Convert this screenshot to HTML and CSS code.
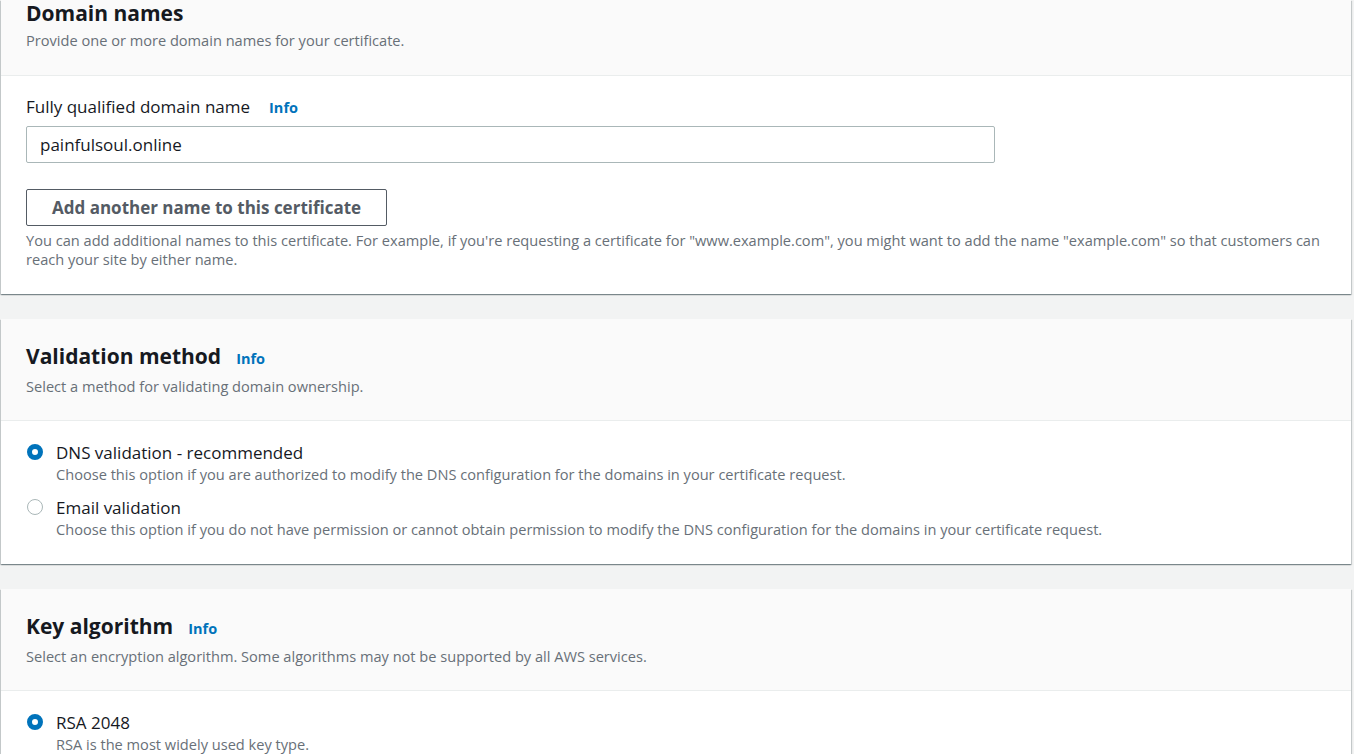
FILE: index.html
```html
<!DOCTYPE html>
<html lang="en">
<head>
<meta charset="utf-8">
<title>Request certificate</title>
<link rel="stylesheet" href="styles.css">
</head>
<body>
<main class="page">
  <section class="card card-first">
    <header class="card-header">
      <h2 class="card-title">Domain names</h2>
      <p class="card-desc">Provide one or more domain names for your certificate.</p>
    </header>
    <div class="card-body">
      <div class="field-label">Fully qualified domain name <a class="info">Info</a></div>
      <div class="input">painfulsoul.online</div>
      <button class="btn" type="button">Add another name to this certificate</button>
      <p class="help">You can add additional names to this certificate. For example, if you're requesting a certificate for "www.example.com", you might want to add the name "example.com" so that customers can reach your site by either name.</p>
    </div>
  </section>

  <section class="card">
    <header class="card-header">
      <h2 class="card-title">Validation method <a class="info">Info</a></h2>
      <p class="card-desc">Select a method for validating domain ownership.</p>
    </header>
    <div class="card-body radios">
      <div class="radio-row">
        <span class="radio checked"></span>
        <div class="radio-text">
          <div class="radio-label">DNS validation - recommended</div>
          <div class="radio-desc">Choose this option if you are authorized to modify the DNS configuration for the domains in your certificate request.</div>
        </div>
      </div>
      <div class="radio-row">
        <span class="radio"></span>
        <div class="radio-text">
          <div class="radio-label">Email validation</div>
          <div class="radio-desc">Choose this option if you do not have permission or cannot obtain permission to modify the DNS configuration for the domains in your certificate request.</div>
        </div>
      </div>
    </div>
  </section>

  <section class="card">
    <header class="card-header">
      <h2 class="card-title">Key algorithm <a class="info">Info</a></h2>
      <p class="card-desc">Select an encryption algorithm. Some algorithms may not be supported by all AWS services.</p>
    </header>
    <div class="card-body radios">
      <div class="radio-row">
        <span class="radio checked"></span>
        <div class="radio-text">
          <div class="radio-label">RSA 2048</div>
          <div class="radio-desc">RSA is the most widely used key type.</div>
        </div>
      </div>
      <div class="radio-row">
        <span class="radio"></span>
        <div class="radio-text">
          <div class="radio-label">ECDSA P 256</div>
          <div class="radio-desc">Equivalent in cryptographic strength to RSA 3072.</div>
        </div>
      </div>
    </div>
  </section>
</main>
</body>
</html>
```

FILE: styles.css
```css
html, body {
  margin: 0;
  padding: 0;
  background: #f2f3f3;
  height: 754px;
  overflow: hidden;
}
body {
  font-family: "Open Sans", "Liberation Sans", sans-serif;
  color: #16191f;
  font-size: 14.6px;
}
.page {
  display: flex;
  flex-direction: column;
  gap: 25px;
  padding: 0 3px 0 1px;
}
.card {
  background: #fff;
  box-shadow: 0 1px 1px 0 rgba(0, 28, 36, 0.3), 1px 1px 1px 0 rgba(0, 28, 36, 0.15), -1px 1px 1px 0 rgba(0, 28, 36, 0.15);
}
.card-header {
  background: #fafafa;
  border-bottom: 1px solid #eaeded;
  padding: 24px 25px 24px;
}
.card-first .card-header {
  padding-top: 0;
  padding-bottom: 25px;
}
.card-title {
  margin: 0;
  font-size: 21px;
  font-weight: 700;
  line-height: 26px;
  display: flex;
  align-items: baseline;
  gap: 15px;
}
.info {
  color: #0073bb;
  font-size: 14.5px;
  font-weight: 700;
}
.card-desc {
  margin: 4px 0 0;
  color: #687078;
  font-size: 14.6px;
  line-height: 20px;
}
.card-body {
  padding: 20px 25px 25px;
}
.field-label {
  font-size: 17px;
  line-height: 22px;
  display: flex;
  align-items: baseline;
  gap: 19px;
}
.input {
  margin-top: 7px;
  height: 35px;
  border: 1px solid #aab7b8;
  border-radius: 2px;
  font-size: 17px;
  line-height: 35px;
  padding: 0 13px;
  box-sizing: content-box;
  width: 941px;
}
.btn {
  display: block;
  margin-top: 26px;
  height: 37px;
  padding: 0 25px;
  border: 1px solid #545b64;
  border-radius: 2px;
  background: #fff;
  color: #545b64;
  font-family: inherit;
  font-size: 17px;
  font-weight: 700;
}
.help {
  margin: 5px 0 0;
  color: #687078;
  font-size: 14.6px;
  line-height: 19px;
}
.radios {
  display: flex;
  flex-direction: column;
  gap: 12px;
  padding-top: 20px;
}
.radio-row {
  display: flex;
  gap: 13px;
}
.radio {
  flex: none;
  width: 14px;
  height: 14px;
  margin-top: 3px;
  margin-left: 1px;
  border: 1.5px solid #aab7b8;
  border-radius: 50%;
  background: #fff;
  box-sizing: content-box;
}
.radio.checked {
  width: 6px;
  height: 6px;
  border: 5.5px solid #0073bb;
}
.radio-label {
  font-size: 17px;
  line-height: 23px;
}
.radio-desc {
  color: #687078;
  font-size: 14.6px;
  line-height: 20px;
}
```
